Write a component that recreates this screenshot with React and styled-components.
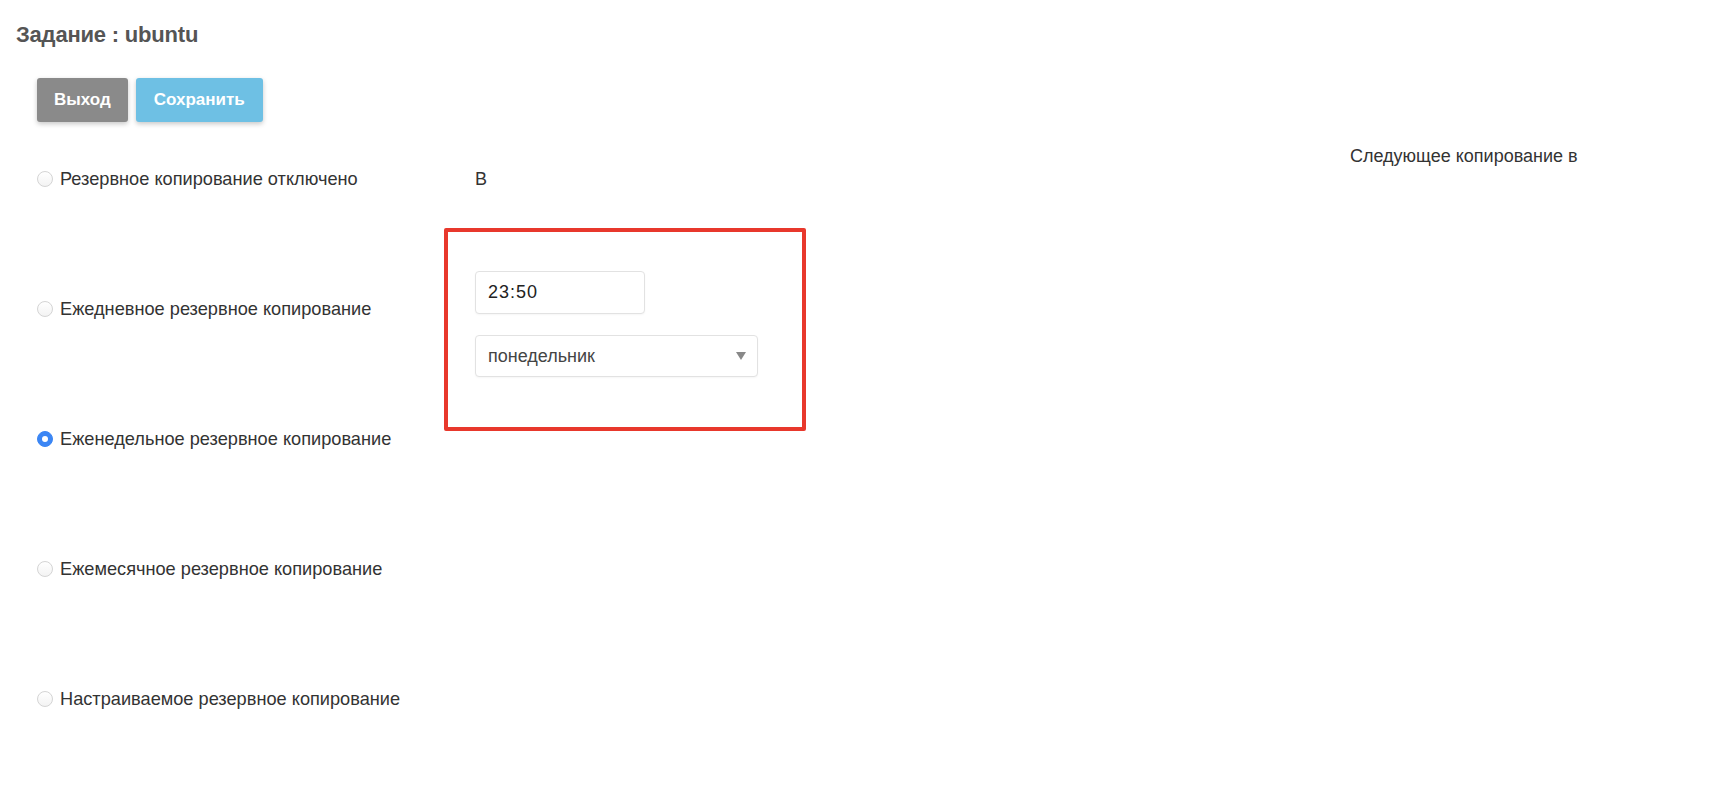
import React from "react";
import styled, { createGlobalStyle } from "styled-components";

const Global = createGlobalStyle`
  html, body { margin: 0; padding: 0; background: #fff; }
  body { font-family: "Liberation Sans", Arial, sans-serif; color: #333; }
  * { box-sizing: border-box; }
`;

const Page = styled.div`
  width: 1714px;
  min-height: 794px;
  padding: 0 16px;
`;

const Title = styled.h1`
  margin: 0;
  padding-top: 22px;
  font-size: 22px;
  line-height: 25px;
  font-weight: bold;
  color: #555;
  letter-spacing: -0.2px;
`;

const Toolbar = styled.div`
  display: flex;
  gap: 8px;
  margin: 31px 0 0 21px;
`;

const Button = styled.button`
  height: 44px;
  padding: 0 ${(p) => p.$pad}px;
  border: none;
  border-radius: 3px;
  background: ${(p) => p.$bg};
  color: #fff;
  font-family: inherit;
  font-size: 17px;
  font-weight: bold;
  box-shadow: 0 2px 5px rgba(0, 0, 0, 0.22);
  cursor: pointer;
`;

const Content = styled.div`
  display: grid;
  grid-template-columns: 407px 906px auto;
  margin: 18px 0 0 21px;
`;

const RadioList = styled.div`
  display: flex;
  flex-direction: column;
  padding-top: 28px;
`;

const RadioRow = styled.label`
  display: flex;
  align-items: flex-start;
  gap: 7px;
  height: 130px;
  font-size: 18.2px;
  line-height: 22px;
  color: #333;
`;

const RadioDot = styled.span`
  width: 16px;
  height: 16px;
  margin-top: 3px;
  border-radius: 50%;
  flex: none;
  display: flex;
  align-items: center;
  justify-content: center;
  background: ${(p) => (p.$checked ? "#3b86f4" : "linear-gradient(#fff, #f3f3f3)")};
  border: 1px solid ${(p) => (p.$checked ? "#3b86f4" : "#d4d4d4")};
  &::after {
    content: "";
    display: ${(p) => (p.$checked ? "block" : "none")};
    width: 6px;
    height: 6px;
    border-radius: 50%;
    background: #fff;
  }
`;

const Middle = styled.div`
  display: flex;
  flex-direction: column;
  align-items: flex-start;
  padding-top: 28px;
`;

const SmallLabel = styled.div`
  margin-left: 31px;
  font-size: 18px;
  line-height: 22px;
  color: #333;
`;

const Highlight = styled.div`
  margin-top: 38px;
  width: 362px;
  height: 203px;
  border: 4px solid #e8382c;
  border-radius: 2px;
  padding: 39px 0 0 27px;
  display: flex;
  flex-direction: column;
  gap: 21px;
`;

const Field = styled.div`
  width: ${(p) => p.$w}px;
  height: ${(p) => p.$h}px;
  border: 1px solid #e2e2e2;
  border-radius: 4px;
  background: #fff;
  box-shadow: 0 1px 2px rgba(0, 0, 0, 0.04);
  display: flex;
  align-items: center;
  justify-content: space-between;
  padding: 0 12px 0 12px;
  font-size: 18px;
  letter-spacing: ${(p) => p.$ls || 0}px;
  color: ${(p) => p.$color};
`;

const Arrow = styled.span`
  width: 0;
  height: 0;
  border-left: 5px solid transparent;
  border-right: 5px solid transparent;
  border-top: 8px solid #888;
  margin-right: -1px;
`;

const NextLabel = styled.div`
  margin-top: 5px;
  font-size: 18px;
  line-height: 22px;
  color: #333;
  white-space: nowrap;
`;

const options = [
  { label: "Резервное копирование отключено" },
  { label: "Ежедневное резервное копирование" },
  { label: "Еженедельное резервное копирование", checked: true },
  { label: "Ежемесячное резервное копирование" },
  { label: "Настраиваемое резервное копирование" },
];

export default function App() {
  return (
    <Page>
      <Global />
      <Title>Задание : ubuntu</Title>
      <Toolbar>
        <Button $bg="#8a8a8a" $pad={17}>Выход</Button>
        <Button $bg="#6ec0e4" $pad={18}>Сохранить</Button>
      </Toolbar>
      <Content>
        <RadioList>
          {options.map((o) => (
            <RadioRow key={o.label}>
              <RadioDot $checked={o.checked} />
              {o.label}
            </RadioRow>
          ))}
        </RadioList>
        <Middle>
          <SmallLabel>В</SmallLabel>
          <Highlight>
            <Field $w={170} $h={43} $color="#222" $ls={1}>23:50</Field>
            <Field $w={283} $h={42} $color="#444">
              понедельник
              <Arrow />
            </Field>
          </Highlight>
        </Middle>
        <NextLabel>Следующее копирование в</NextLabel>
      </Content>
    </Page>
  );
}
